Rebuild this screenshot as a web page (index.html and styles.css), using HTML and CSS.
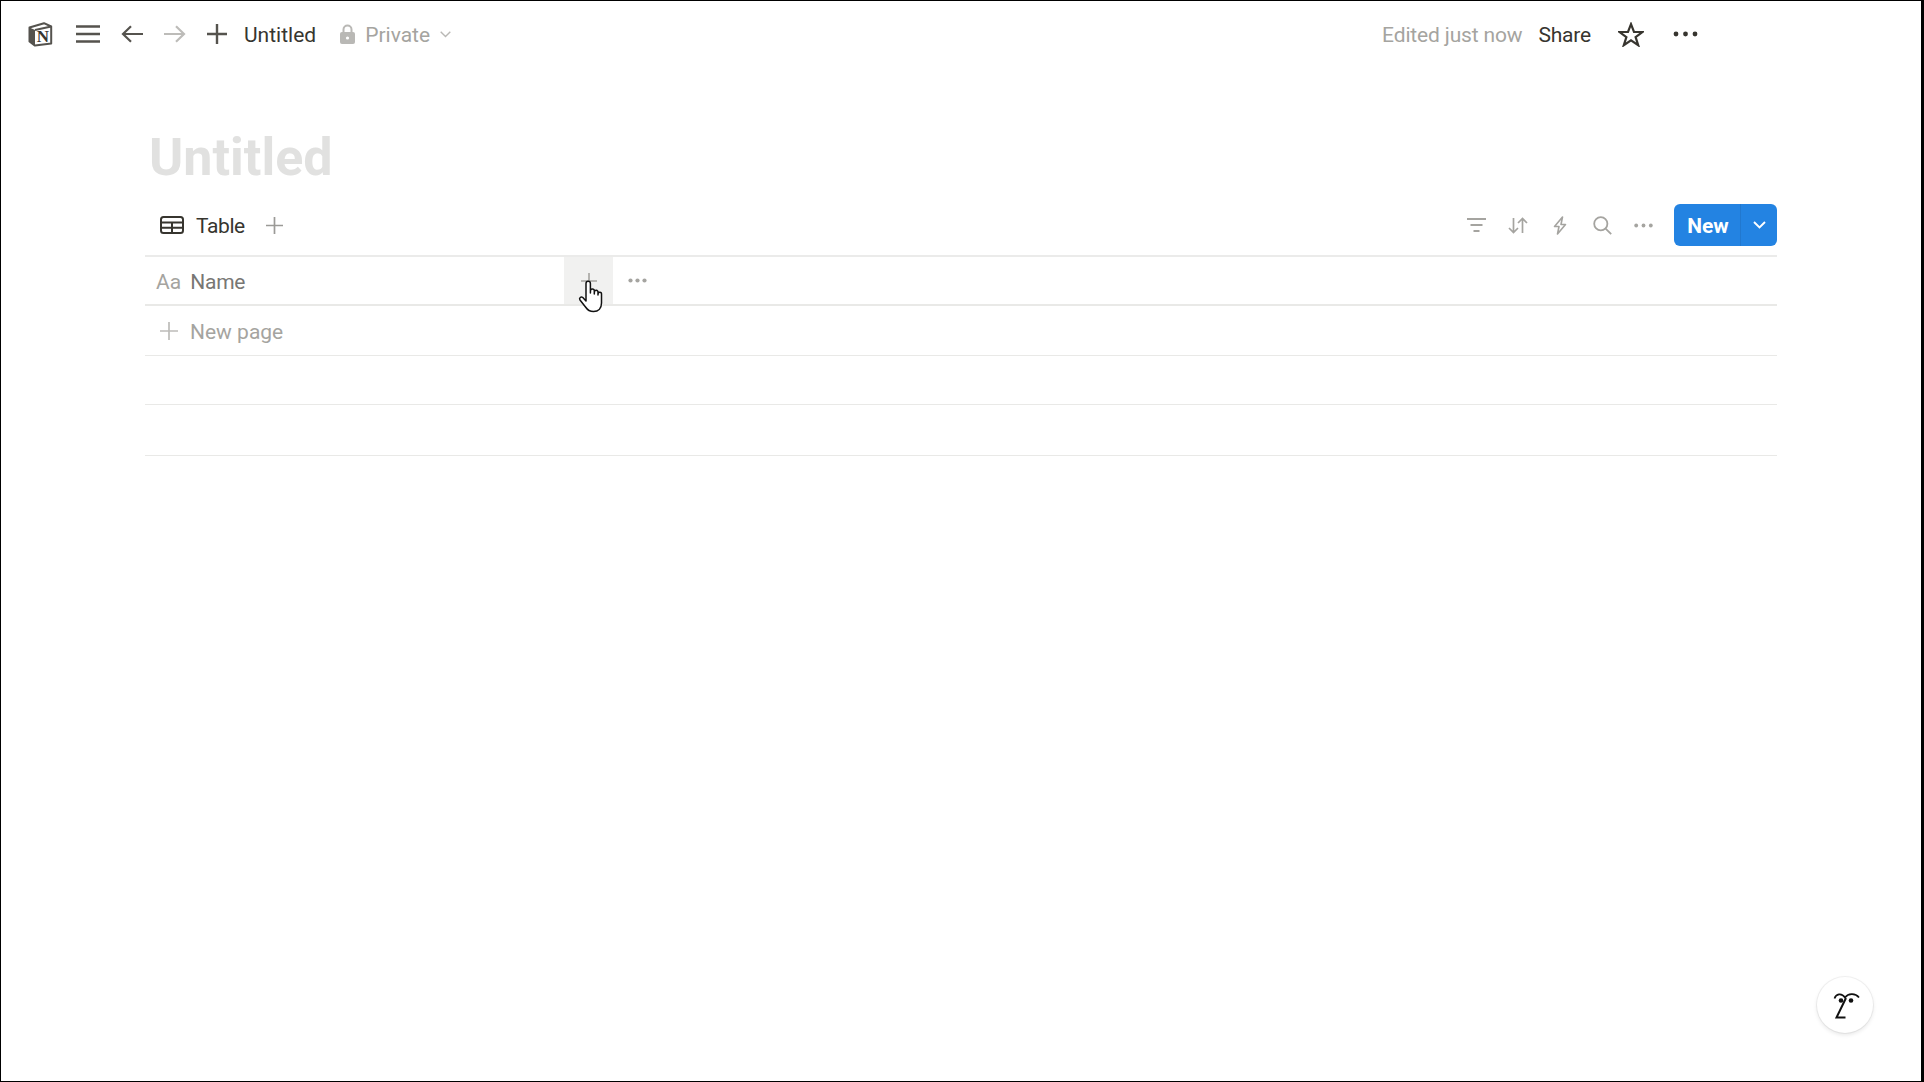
FILE: index.html
```html
<!DOCTYPE html>
<html lang="en">
<head>
<meta charset="utf-8">
<title>Untitled</title>
<link rel="stylesheet" href="styles.css">
</head>
<body>
<div class="frame">
  <header class="topbar">
    <div class="nav">
      <svg class="ic logo" viewBox="0 0 26 26"><path d="M2.5 6.5 L17 2.2 L24.2 5.5 L24.2 22.5 L8 24.6 L2.5 20.5 Z" fill="#fff" stroke="#55534e" stroke-width="2" stroke-linejoin="round"/><path d="M2.5 6.5 L8 9 L8 24.6 L2.5 20.5 Z" fill="#55534e"/><path d="M8 9 L24.2 5.5" stroke="#55534e" stroke-width="2"/><text x="16" y="21" class="logo-n">N</text></svg>
      <svg class="ic burger" viewBox="0 0 24 18"><path d="M0 1.5H24M0 9H24M0 16.5H24" stroke="#55534e" stroke-width="2.4"/></svg>
      <svg class="ic back" viewBox="0 0 22 18"><path d="M22 9H2M10 1.2 2 9l8 7.8" fill="none" stroke="#55534e" stroke-width="2.2"/></svg>
      <svg class="ic fwd" viewBox="0 0 22 18"><path d="M0 9H20M12 1.2 20 9l-8 7.8" fill="none" stroke="#bdbcb9" stroke-width="2.2"/></svg>
      <svg class="ic add" viewBox="0 0 20 20"><path d="M0 10H20M10 0V20" stroke="#55534e" stroke-width="2.4"/></svg>
      <span class="crumb txt">Untitled</span>
      <div class="private">
        <svg class="lock" viewBox="0 0 15 20"><path d="M3.5 9V5.5a4 4 0 0 1 8 0V9" fill="none" stroke="#b9b8b5" stroke-width="2"/><rect x="0" y="8" width="15" height="12" rx="2" fill="#b9b8b5"/><circle cx="7.5" cy="14" r="1.6" fill="#fff"/></svg>
        <span class="muted txt">Private</span>
        <svg class="chev" viewBox="0 0 11 7"><path d="M.7.8 5.5 5.6 10.3.8" fill="none" stroke="#b9b8b5" stroke-width="1.4"/></svg>
      </div>
    </div>
    <div class="actions">
      <span class="muted txt edited">Edited just now</span>
      <span class="share txt">Share</span>
      <svg class="star" viewBox="0 0 26 25"><path d="M13 2.2 16 10h8.4l-6.800 5.200 2.600 8L13 18.300l-7.200 4.900 2.600-8L1.600 10H10Z" fill="none" stroke="#37352f" stroke-width="2.200" stroke-linejoin="miter"/></svg>
      <svg class="more" viewBox="0 0 25 6"><circle cx="3" cy="3" r="2.400" fill="#37352f"/><circle cx="12.500" cy="3" r="2.400" fill="#37352f"/><circle cx="22" cy="3" r="2.400" fill="#37352f"/></svg>
    </div>
  </header>

  <main class="page">
    <h1 class="title">Untitled</h1>
    <div class="toolbar">
      <div class="tabs">
        <svg class="tab-ic" viewBox="0 0 24 18"><rect x="1" y="1" width="22" height="16" rx="2.500" fill="none" stroke="#37352f" stroke-width="2"/><path d="M1 6.500H23M1 11.800H23M12 6.500V17" stroke="#37352f" stroke-width="2"/></svg>
        <span class="tab-label txt">Table</span>
        <svg class="tab-add" viewBox="0 0 17 17"><path d="M0 8.500H17M8.500 0V17" stroke="#9b9a97" stroke-width="1.700"/></svg>
      </div>
      <div class="tools">
        <svg class="t-filter" viewBox="0 0 19 14"><path d="M0 1H19M3.500 7H15.500M6.500 13H12.500" stroke="#a5a4a0" stroke-width="1.800"/></svg>
        <svg class="t-sort" viewBox="0 0 20 17"><path d="M5.500 1V15.500M1 11l4.500 4.500L10 11M14.500 16V1.500M10 6l4.500-4.500L19 6" fill="none" stroke="#a5a4a0" stroke-width="1.700"/></svg>
        <svg class="t-bolt" viewBox="0 0 14 19"><path d="M9.500 1 1.500 10.500H6L4.500 18l8-9.500H8Z" fill="none" stroke="#a5a4a0" stroke-width="1.600" stroke-linejoin="round"/></svg>
        <svg class="t-search" viewBox="0 0 19 19"><circle cx="7.800" cy="7.800" r="6.600" fill="none" stroke="#a5a4a0" stroke-width="1.800"/><path d="M12.600 12.600 18.200 18.200" stroke="#a5a4a0" stroke-width="1.800"/></svg>
        <svg class="t-more" viewBox="0 0 19 5"><circle cx="2.200" cy="2.500" r="1.900" fill="#a5a4a0"/><circle cx="9.500" cy="2.500" r="1.900" fill="#a5a4a0"/><circle cx="16.800" cy="2.500" r="1.900" fill="#a5a4a0"/></svg>
        <div class="new-btn">
          <span class="new-label txt">New</span>
          <span class="new-drop"><svg class="new-chev" viewBox="0 0 13 8"><path d="M1 1 6.500 6.500 12 1" fill="none" stroke="#fff" stroke-width="1.900"/></svg></span>
        </div>
      </div>
    </div>
    <div class="table">
      <div class="row head">
        <div class="name-cell"><span class="aa txt">Aa</span><span class="name txt">Name</span></div>
        <div class="add-cell">
          <svg class="cell-plus" viewBox="0 0 16 16"><path d="M0 8H16M8 0V16" stroke="#a5a4a0" stroke-width="1.600"/></svg>
          <svg class="hand" viewBox="0 0 26 34"><path d="M8 22V4.500a2.200 2.200 0 0 1 4.400 0V14l.1-2.200a1.900 1.900 0 0 1 3.800 0V15l.1-2a1.800 1.800 0 0 1 3.600.3V16l.1-1.200a1.700 1.700 0 0 1 3.400.2V24c0 5-3 8.500-8 8.500-4 0-6-1.500-8-4.500l-5.500-7c-1.300-2 1-3.800 2.800-2.500Z" fill="#fff" stroke="#111" stroke-width="1.500" stroke-linejoin="round"/></svg>
        </div>
        <svg class="head-more" viewBox="0 0 19 5"><circle cx="2.500" cy="2.500" r="2.100" fill="#a5a4a0"/><circle cx="9.500" cy="2.500" r="2.100" fill="#a5a4a0"/><circle cx="16.500" cy="2.500" r="2.100" fill="#a5a4a0"/></svg>
      </div>
      <div class="row newpage">
        <svg class="np-plus" viewBox="0 0 18 18"><path d="M0 9H18M9 0V18" stroke="#bdbcb9" stroke-width="1.700"/></svg>
        <span class="muted txt">New page</span>
      </div>
      <div class="row empty"></div>
      <div class="row empty tall"></div>
    </div>
  </main>

  <div class="help">
    <svg viewBox="0 0 28 30"><path d="M1.500 8.500C3 4 8.500 2.500 12 7.500 15 3.500 22 2.500 26 7.500" fill="none" stroke="#111" stroke-width="1.700"/><circle cx="8" cy="10.500" r="2.300" fill="#111"/><circle cx="18" cy="10.500" r="2.300" fill="#111"/><path d="M13 8 3.500 27.500H12.500" fill="none" stroke="#111" stroke-width="2"/></svg>
  </div>
</div>
</body>
</html>
```
FILE: styles.css
```css
* { box-sizing: border-box; }
html, body { margin: 0; padding: 0; background: #000; }
body {
  font-family: Roboto, "Open Sans", sans-serif;
  font-size: 21px;
  color: #37352f;
}
.frame {
  position: relative;
  width: 1924px;
  height: 1082px;
  background: #fff;
  border-style: solid;
  border-color: #000;
  border-width: 1px 3px 1px 1px;
  overflow: hidden;
}
svg { display: block; flex: none; }
.txt { padding-top: 2px; }

.topbar {
  height: 66px;
  display: flex;
  align-items: center;
  justify-content: space-between;
  padding: 0 223px 0 26px;
}
.nav, .actions, .private { display: flex; align-items: center; }
.logo { width: 26px; height: 26px; }
.logo-n {
  font-family: "Liberation Serif", serif;
  font-weight: 700;
  font-size: 17px;
  fill: #37352f;
  text-anchor: middle;
}
.burger { width: 24px; height: 18px; margin-left: 23px; }
.back { width: 22px; height: 18px; margin-left: 21px; }
.fwd { width: 22px; height: 18px; margin-left: 21px; }
.add { width: 20px; height: 20px; margin-left: 21px; }
.crumb { margin-left: 17px; color: #37352f; }
.private { margin-left: 24px; }
.lock { width: 15px; height: 20px; }
.muted { color: #a5a4a0; }
.private .muted { margin-left: 10px; }
.chev { width: 11px; height: 7px; margin-left: 10px; }
.edited { letter-spacing: -0.15px; }
.share { margin-left: 16px; letter-spacing: -0.2px; }
.star { width: 26px; height: 25px; margin-left: 27px; }
.more { width: 25px; height: 6px; margin-left: 29px; }

.page { padding: 0 0 0 144px; width: 1776px; }
.title {
  margin: 61px 0 0 4px;
  font-size: 52px;
  line-height: 60px;
  font-weight: 700;
  color: #e1e1e0;
}
.toolbar {
  margin-top: 16px;
  height: 42px;
  display: flex;
  align-items: center;
  justify-content: space-between;
}
.tabs { display: flex; align-items: center; padding-left: 15px; }
.tab-ic { width: 24px; height: 18px; }
.tab-label { margin-left: 12px; letter-spacing: -0.4px; }
.tab-add { width: 17px; height: 17px; margin-left: 21px; }
.tools { display: flex; align-items: center; }
.t-filter { width: 19px; height: 14px; }
.t-sort { width: 20px; height: 17px; margin-left: 22px; }
.t-bolt { width: 14px; height: 19px; margin-left: 25px; }
.t-search { width: 19px; height: 19px; margin-left: 26px; }
.t-more { width: 19px; height: 5px; margin-left: 22px; }
.new-btn {
  display: flex;
  height: 42px;
  width: 103px;
  margin-left: 21px;
  border-radius: 6px;
  background: #2383e2;
  color: #fff;
}
.new-label {
  width: 67px;
  display: flex;
  align-items: center;
  justify-content: center;
  font-weight: 700;
  border-right: 1px solid #2178cf;
  padding-left: 2px;
}
.new-drop { flex: 1; display: flex; align-items: center; justify-content: center; }
.new-chev { width: 13px; height: 8px; }

.table { margin-top: 9px; border-top: 2px solid #ebebea; }
.row {
  display: flex;
  align-items: center;
  border-bottom: 1px solid #e9e9e7;
}
.head { height: 49px; border-bottom-width: 2px; }
.name-cell { width: 419px; display: flex; align-items: center; padding-left: 11px; }
.aa { color: #a5a4a0; }
.name { margin-left: 9px; color: #787774; letter-spacing: -0.2px; }
.add-cell {
  position: relative;
  width: 49px;
  align-self: stretch;
  background: #f1f1f0;
  display: flex;
  align-items: center;
  justify-content: center;
}
.cell-plus { width: 16px; height: 16px; }
.hand { position: absolute; left: 14px; top: 22px; width: 26px; height: 34px; }
.head-more { width: 19px; height: 5px; margin-left: 15px; }
.newpage { height: 50px; padding-left: 15px; }
.np-plus { width: 18px; height: 18px; }
.newpage .muted { margin-left: 12px; }
.empty { height: 49px; }
.tall { height: 51px; }

.help {
  position: absolute;
  left: 1816px;
  top: 976px;
  width: 56px;
  height: 56px;
  border-radius: 50%;
  background: #fff;
  box-shadow: 0 0 0 1px rgba(15,15,15,.05), 0 2px 4px rgba(15,15,15,.1);
  display: flex;
  align-items: center;
  justify-content: center;
}
.help svg { width: 28px; height: 30px; margin-left: 3px; }
```
